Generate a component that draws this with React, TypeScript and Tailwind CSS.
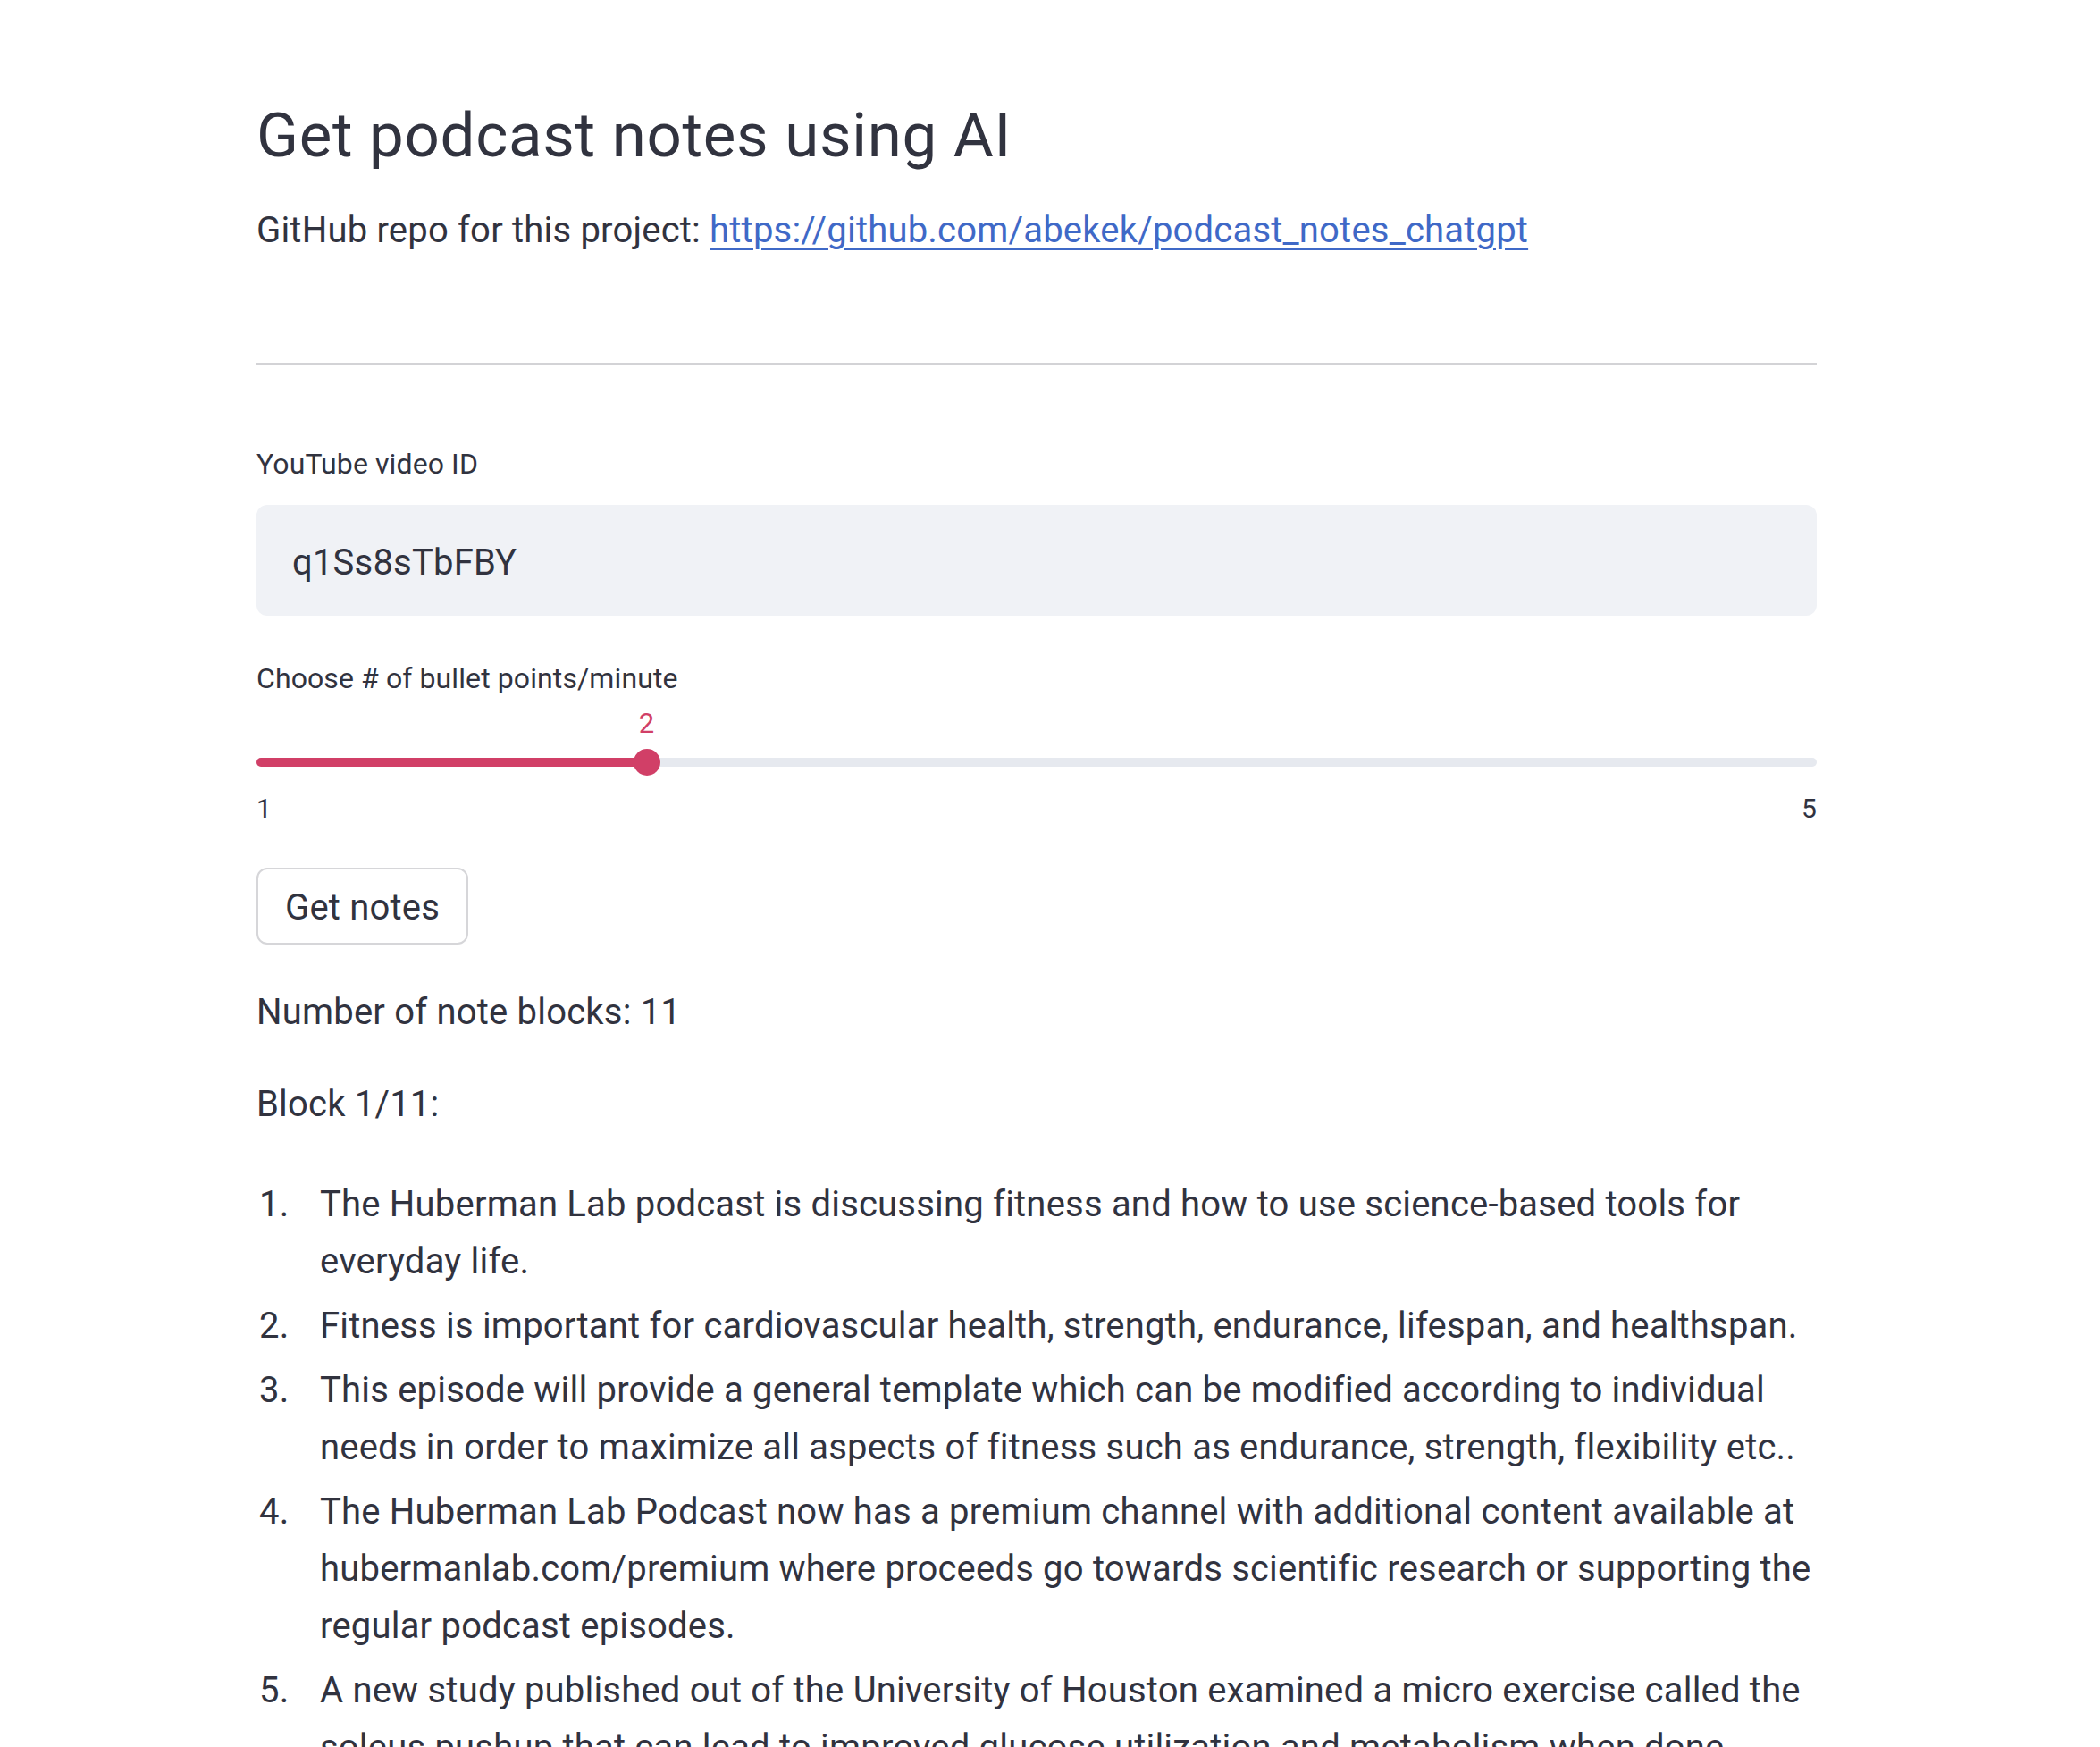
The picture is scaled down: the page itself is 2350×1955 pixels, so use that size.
import { useState } from 'react';

const notes: string[] = [
  'The Huberman Lab podcast is discussing fitness and how to use science-based tools for everyday life.',
  'Fitness is important for cardiovascular health, strength, endurance, lifespan, and healthspan.',
  'This episode will provide a general template which can be modified according to individual needs in order to maximize all aspects of fitness such as endurance, strength, flexibility etc..',
  'The Huberman Lab Podcast now has a premium channel with additional content available at hubermanlab.com/premium where proceeds go towards scientific research or supporting the regular podcast episodes.',
  'A new study published out of the University of Houston examined a micro exercise called the soleus pushup that can lead to improved glucose utilization and metabolism when done',
];

function Slider({ value, min, max }: { value: number; min: number; max: number }) {
  const pct = ((value - min) / (max - min)) * 100;
  return (
    <div>
      <div className="relative mt-[12px] h-[36px]">
        <span
          className="absolute top-[1px] -translate-x-1/2 text-[31px] leading-[36px] text-[#d13f67]"
          style={{ left: `${pct}%` }}
        >
          {value}
        </span>
      </div>
      <div className="relative mt-[11px] flex h-[30px] items-center">
        <div className="h-[10px] w-full rounded-full bg-[#e6e9ef]">
          <div className="h-full rounded-full bg-[#d13f67]" style={{ width: `${pct}%` }} />
        </div>
        <div
          className="absolute top-0 h-[30px] w-[30px] -translate-x-1/2 rounded-full bg-[#d13f67]"
          style={{ left: `${pct}%` }}
        />
      </div>
      <div className="mt-[19px] flex justify-between text-[30px] leading-[36px] text-[#31333f]">
        <span>{min}</span>
        <span>{max}</span>
      </div>
    </div>
  );
}

export default function App() {
  const [videoId, setVideoId] = useState('q1Ss8sTbFBY');

  return (
    <div
      className="h-[1955px] overflow-hidden bg-white text-[#31333f] tracking-[0.2px]"
      style={{ fontFamily: 'Roboto, "Noto Sans", sans-serif' }}
    >
      <div className="ml-[287px] w-[1746px] pt-[110px]">
        <h1 className="text-[69px] leading-[84px] font-normal tracking-[0.7px]">Get podcast notes using AI</h1>
        <p className="mt-[32px] text-[40px] leading-[64px]">
          GitHub repo for this project:{' '}
          <a
            href="https://github.com/abekek/podcast_notes_chatgpt"
            className="text-[#3f69c7] underline decoration-[3px] underline-offset-[6px]"
          >
            https://github.com/abekek/podcast_notes_chatgpt
          </a>
        </p>

        <hr className="mt-[116px] h-[2px] border-0 bg-[#d3d3d6]" />

        <label className="mt-[91px] block text-[32px] leading-[40px] tracking-[0.1px]">YouTube video ID</label>
        <div className="mt-[26px] flex h-[124px] items-center rounded-[12px] bg-[#f0f2f6] pl-[40px] pt-[5px]">
          <input
            value={videoId}
            onChange={(e) => setVideoId(e.target.value)}
            className="w-full bg-transparent text-[40px] leading-[64px] tracking-[0.2px] text-[#31333f] outline-none"
          />
        </div>

        <label className="mt-[50px] block text-[32px] leading-[40px] tracking-[0.1px]">
          Choose # of bullet points/minute
        </label>
        <Slider value={2} min={1} max={5} />

        <button className="mt-[48px] flex h-[86px] w-[237px] items-center justify-center rounded-[12px] border-2 border-[#d6d6d9] bg-white pt-[4px] text-[40px] leading-[64px]">
          Get notes
        </button>

        <p className="mt-[44px] text-[40px] leading-[64px]">Number of note blocks: 11</p>
        <p className="mt-[39px] text-[40px] leading-[64px]">Block 1/11:</p>

        <ol className="mt-[48px] flex flex-col gap-[8px] text-[40px] leading-[64px]">
          {notes.map((n, i) => (
            <li key={i} className="flex">
              <span className="w-[71px] shrink-0 pl-[3px]">{i + 1}.</span>
              <span className="flex-1">{n}</span>
            </li>
          ))}
        </ol>
      </div>
    </div>
  );
}
